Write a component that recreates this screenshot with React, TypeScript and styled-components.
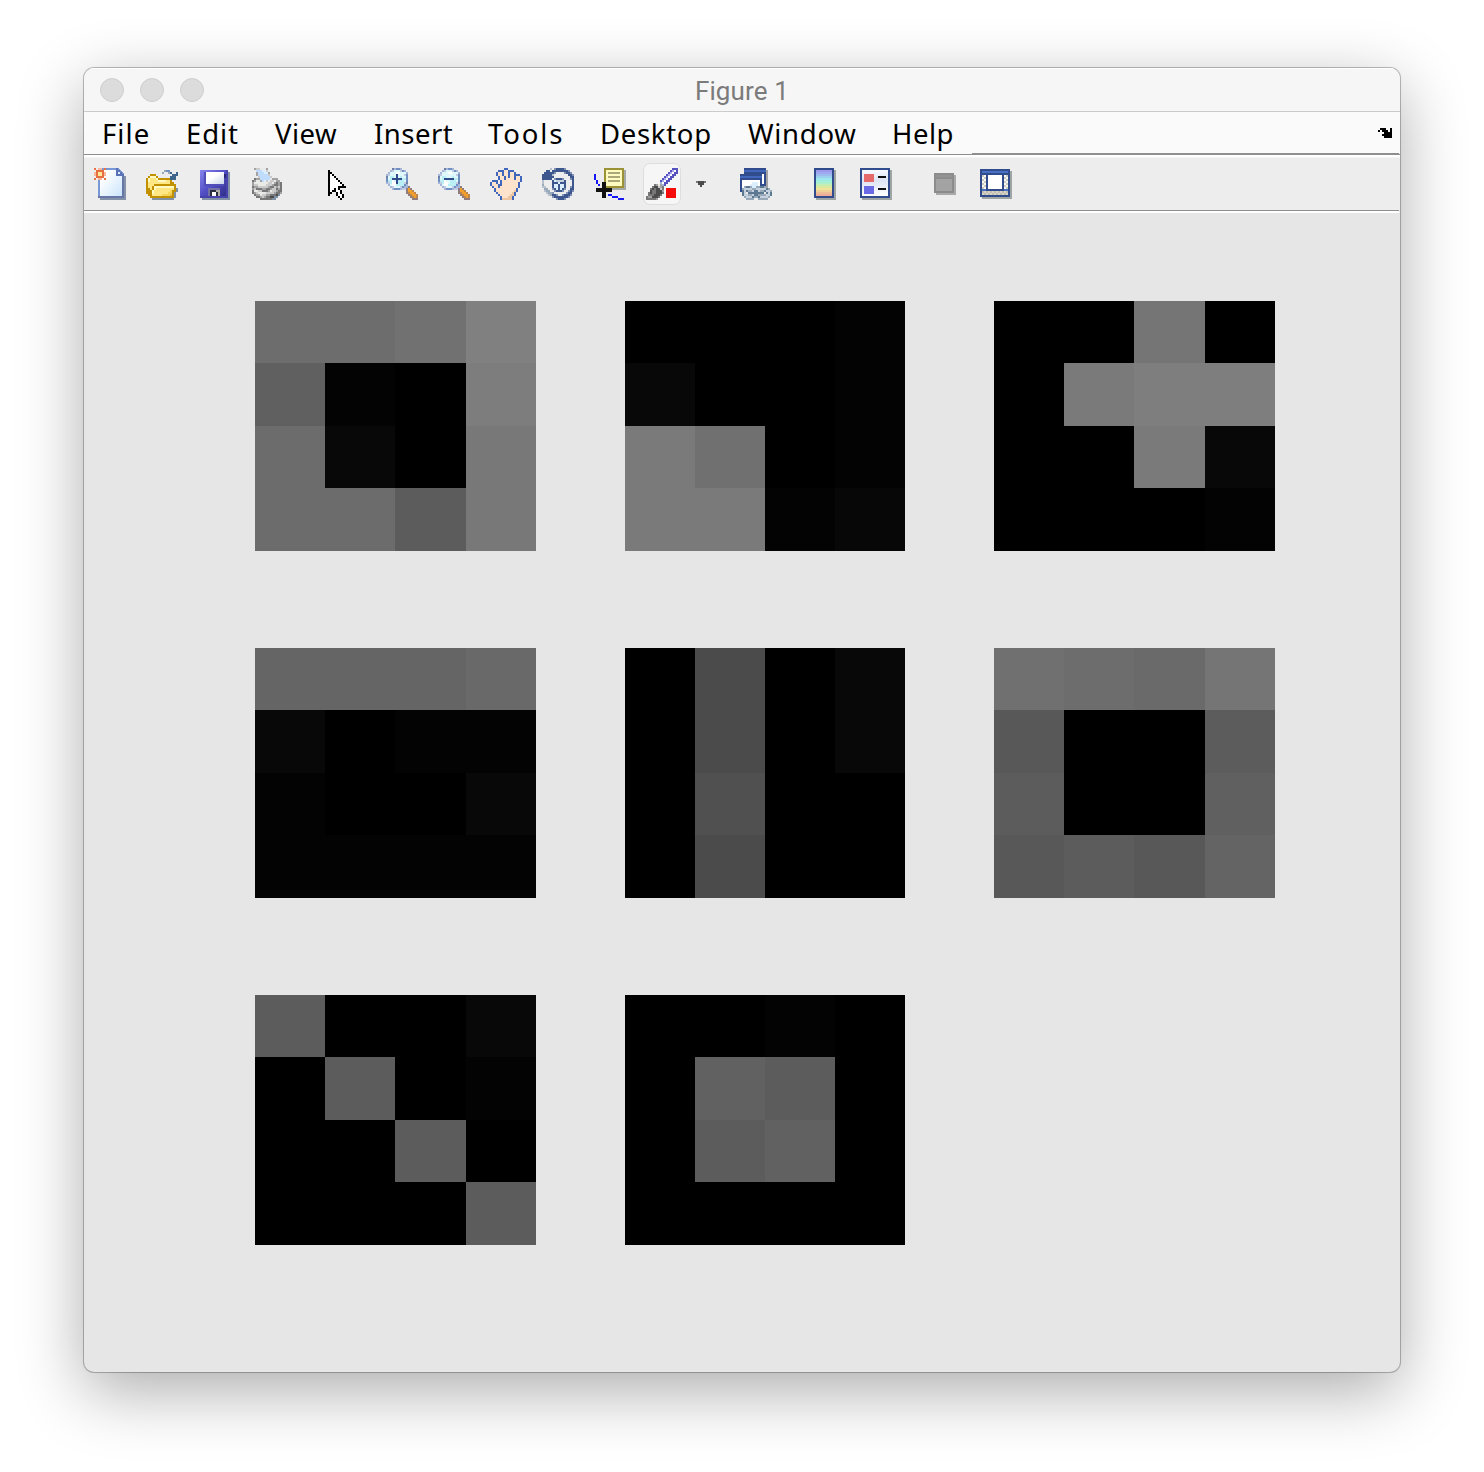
import React from "react";
import styled, { createGlobalStyle } from "styled-components";

const GlobalStyle = createGlobalStyle`
  * { box-sizing: border-box; }
  html, body { margin: 0; background: #fff; }
`;

const Desktop = styled.div`
  width: 1484px;
  height: 1472px;
  padding: 68px 84px 100px;
  overflow: hidden;
  background: #fff;
`;

const Window = styled.section`
  display: flex;
  flex-direction: column;
  width: 1316px;
  height: 1304px;
  border-radius: 10px;
  overflow: hidden;
  background: #e6e6e6;
  box-shadow: 0 0 0 1px rgba(0, 0, 0, 0.22), 0 0 2px rgba(0, 0, 0, 0.15), 0 19px 66px rgba(0, 0, 0, 0.33);
`;

const TitleBar = styled.header`
  display: grid;
  grid-template-columns: 1fr auto 1fr;
  align-items: center;
  height: 44px;
  padding: 0 16px;
  background: #f6f6f6;
  border-bottom: 1px solid #cbcbcb;
  box-shadow: inset 0 1px 0 #fff;
`;

const Lights = styled.div`
  display: flex;
  gap: 16px;
`;

const Light = styled.i`
  width: 24px;
  height: 24px;
  border-radius: 50%;
  background: #dcdcdc;
  border: 1px solid #cecece;
`;

const Title = styled.h1`
  margin: 3px 0 0;
  font: 400 26px/30px Roboto, "Liberation Sans", sans-serif;
  letter-spacing: 0.15px;
  color: #7b7b7b;
`;

const MenuBar = styled.nav`
  display: flex;
  justify-content: space-between;
  height: 46px;
  background: linear-gradient(#fafafa 0 42px, #8e8e8e 42px 43px, #fff 43px 45px, #f4f4f4 45px);
`;

const MenuItems = styled.div`
  display: flex;
  width: 888px;
  padding-left: 18px;
`;

const MenuItem = styled.span<{ $w: number; $ls: number }>`
  width: ${(p) => p.$w}px;
  white-space: nowrap;
  font: 400 27.5px/43px "Noto Sans", "Open Sans", sans-serif;
  letter-spacing: ${(p) => p.$ls}px;
  color: #000;
`;

const MenuEnd = styled.div`
  display: flex;
  flex: 1;
  justify-content: flex-end;
  height: 43px;
  margin-right: 1px;
  padding: 16px 7px 0 0;
  border-bottom: 2px solid #8e8e8e;
`;

const ToolBar = styled.div`
  display: flex;
  height: 55px;
  padding: 5px 0 0 10px;
  background: linear-gradient(#ededed 0 52px, #8e8e8e 52px 53px, #fff 53px 55px);
  border-right: 1px solid #ededed;
`;

const Tool = styled.button<{ $gap?: number; $w?: number }>`
  display: flex;
  align-items: center;
  justify-content: center;
  width: ${(p) => p.$w ?? 32}px;
  height: 42px;
  margin: 0 0 0 ${(p) => p.$gap ?? 20}px;
  padding: 0;
  border: 0;
  background: none;
`;

const ActiveTool = styled(Tool)`
  background: #f6f6f6;
  border: 1px solid #dedede;
  border-radius: 7px;
`;

const Figure = styled.main`
  flex: 1;
  display: grid;
  grid-template-columns: 281px 280px 281px;
  grid-template-rows: repeat(3, 250px);
  column-gap: 89px;
  row-gap: 97px;
  padding: 88px 0 0 171px;
`;

const Plot = styled.div<{ $even: boolean }>`
  display: grid;
  grid-template-columns: 70px 70px ${(p) => (p.$even ? 70 : 71)}px 70px;
  grid-template-rows: 62px 63px 62px 63px;
`;

const Cell = styled.div<{ $v: number }>`
  background: rgb(${(p) => p.$v}, ${(p) => p.$v}, ${(p) => p.$v});
`;

const Svg = styled.svg`
  display: block;
  flex: none;
  overflow: visible;
`;

const INK: Record<string, string> = {
  k: "#000000", w: "#ffffff", n: "#304c8c", b: "#4167bd", s: "#fde3cb", t: "#edc5a0",
  l: "#a5b4d9", L: "#c3cbe2", c: "#b8eef4", C: "#dff8fb", o: "#f2a02b", O: "#bd8450",
  p: "#8f7c7c", y: "#ffe783", Y: "#fffac2", g: "#c29100", G: "#e8bd37", f: "#f7d45a",
  d: "#4b4b4b", D: "#777777", e: "#a2a2a2", E: "#cacaca", F: "#e9e9e5", q: "#bfdcff",
  Q: "#7da6e4", r: "#f60b0b", v: "#5552bd", V: "#aaa9ee", z: "#8090a5", x: "#3f658b",
  h: "#eb713f", H: "#f3b49d", i: "#dcefff", a: "#fffffb", m: "#718fc0", j: "#6e7fa5",
  N: "#3d568e", u: "#8091b3", U: "#b9c1cf", T: "#98a9b9", S: "#c5d2de", R: "#5d7891",
};

function Pixels({ rows }: { rows: string[] }) {
  const w = Math.max(...rows.map((r) => r.length));
  return (
    <Svg width={w * 2} height={rows.length * 2} viewBox={`0 0 ${w} ${rows.length}`} shapeRendering="crispEdges">
      {rows.flatMap((row, y) =>
        [...row].map((ch, x) =>
          ch === "." ? null : <rect key={`${x}-${y}`} x={x} y={y} width={1} height={1} fill={INK[ch]} />
        )
      )}
    </Svg>
  );
}

const folder = [
  "................",
  ".........Tmm....",
  "........T..Tx..x",
  "..ggg........xxx",
  ".gYYYg......xxx.",
  "gYyyyYggggggxxx.",
  "gYyyyyYYYYyyg...",
  "gyyyyyyyyyyygg..",
  "gyyyggggggggggg.",
  "gyygYYYYYYYYYYg.",
  "ggygYyyyyyyyyygz",
  "gggYyyyyyyyyfggz",
  "gggYyyyyyyyffgz.",
  ".ggyyyyyffffGgz.",
  "..ggggggggggggz.",
  "...zzzzzzzzzzz..",
];

const printer = [
  "..eEEFFFe.......",
  "...qqqiiE.......",
  "...eqqqiie......",
  "...eqqqqqE......",
  "....EqqqqqE.....",
  "..DeeqqqqqFeee..",
  ".DeFFeqiEFEEFee.",
  ".eFFFFFFFEEFeDeD",
  ".eEEFFFFEEEeDDeD",
  ".DeeEEEEEeDDEeED",
  ".eEDDDeeDDeEEDeD",
  ".DFFEEDDDeFEEeDD",
  ".DeEFFFFEEEEeDDe",
  "..DeeFEEeeDDDdz.",
  "...DDeEeDDddzz..",
  ".....DDDDDDzz...",
];

const pointer = [
  "k........", "kk.......", "kwk......", "kwwk.....", "kwwwk....",
  "kwwwwk...", "kwwwwwk..", "kwwwwwwk.", "kwwwwkkkk", "kwwkwk...",
  "kwkkwwk..", "kk..kwk..", "k...kwwk.", ".....kwk.", "......k..",
];

const magnifier = (plus: boolean) => {
  const v = plus ? "n" : "C";
  return [
    "...jlmml........",
    "..lLCCCLml......",
    ".lCCCwwCCCl.....",
    `lLCCC${v}CCCLm.....`,
    `jCccC${v}CcCCm.....`,
    "mCcnnnnnccm.....",
    `mccwC${v}cccCm.....`,
    `lLcww${v}cccLj.....`,
    ".lCwwccccml.....",
    "..lLCCCLmllp....",
    "...lmmmlLLpop...",
    "..........pooO..",
    "..........pOooO.",
    "...........pOooO",
    "............pOoO",
    ".............ppp",
  ];
};

const hand = [
  ".......bb.......",
  "....bbbssbbb....",
  "...bssbssbssb...",
  "...bssbssbssbbb.",
  "....bssbsbssbssb",
  "....bssbssssbssb",
  ".bbb.bsssssssssb",
  "bssb.bssssssssb.",
  "bsssbbssssssssb.",
  ".bssbsssssssssb.",
  "..bssssssssssb..",
  "..bssssssssstb..",
  "...bssssssstb...",
  "....bsssssttb...",
  ".....bsssttb....",
  ".....btttttb....",
];

const rotate = [
  "....U.uNNNNu....",
  "..NN.NNNNNNNNu..",
  ".NNNNNu....uNNu.",
  "NNNNNU.......NNu",
  "NNNNNN........NN",
  "NNNNN.uNNNu...uN",
  "U....NiSSSSN...N",
  "U....NNNiNNN...N",
  "T....NiiNiiN...N",
  "UU...NiiNiiN..uN",
  ".TT..uNiNiNu..NN",
  ".UTT..uNNNu..uNu",
  "..UTTu......uNN.",
  "...UTNNu..uNNNu.",
  ".....uNNNNNNNu..",
  ".......uNNNu....",
];

const brush = [
  ".............vvv",
  "............vVwv",
  "...........vVwvv",
  "..........vVwvv.",
  ".........vVwvv..",
  "........vVwvv...",
  ".......vVwvv....",
  ".......lwvv.....",
  "....DeFelv......",
  "...DddEeD.......",
  "..DdDddED.rrrrr.",
  "..dDDddde.rrrrr.",
  ".DdDDdddD.rrrrr.",
  ".DDDdddD..rrrrr.",
  "DeedddD...rrrrr.",
  "DDDDDe..........",
];

const linked = [
  "..nnnnnnnnnnn...",
  "..bbbbbbbbbbbe..",
  "..nnnnnnnnnnne..",
  "nnnnnnnnnnnwne..",
  "bbbbbbbbbbbwne..",
  "nnnnnnnnnnnwne..",
  "nwwwwwwwwwnwne..",
  "nwwwwwiiiwnwne..",
  "nwwwwiiiiwnnne..",
  "nwTRRTiiTTRRTe..",
  "nTSSSSTTSSSSSRT.",
  "nRSRTTSRRSTTRSST",
  ".RS.RRRRRRRR.RSR",
  ".RSSTTSRRTTTTSSR",
  "..TSSSRTTRSSSST.",
  "...TTTT..TTTTT..",
];

const undock = [".kkk..k", "k.kkk.k", "...kkkk", "..kkkkk", "...kkkk"];
const caret = ["DdddD", ".ddd.", "..d.."];

const NewIcon = () => (
  <Svg width={32} height={32} viewBox="0 0 16 16" shapeRendering="crispEdges">
    <defs>
      <linearGradient id="page" x1="0" y1="0" x2="1" y2="1">
        <stop offset="0.2" stopColor="#fff" /><stop offset="1" stopColor="#cbe5fb" />
      </linearGradient>
    </defs>
    <path d="M3 2h10v2h3v12H3z" fill="#8392a8" />
    <path d="M2 0h10l3 3v12H2z" fill="#7898d5" />
    <path d="M3 1h8v3h3v10H3z" fill="url(#page)" />
    <path d="M14 3h1v12H2v-1h12z" fill="#6676a7" />
    <path d="M11 0h1v1h1v1h1v1h1v1h-4z" fill="#5b72b5" />
    <path d="M12 2h1v1h-1z" fill="#d5e9ff" />
    <path d="M0 0h1v1H0zM5 0h1v1H5zM0 5h1v1H0zM5 5h1v1H5z" fill="#e97146" />
    <path d="M1 1h4v4H1z" fill="#e66f42" />
    <path d="M2 0h2v1H2zM0 2h1v2H0zM5 2h1v2H5zM2 5h2v1H2z" fill="#f6b9a0" />
    <path d="M2 2h2v2H2z" fill="#ffe899" />
  </Svg>
);

const SaveIcon = () => (
  <Svg width={32} height={32} viewBox="0 0 16 16" shapeRendering="crispEdges">
    <defs>
      <linearGradient id="disk" x1="0" y1="0" x2="1" y2="1">
        <stop offset="0" stopColor="#8785ee" /><stop offset="0.5" stopColor="#5350c6" /><stop offset="1" stopColor="#312f89" />
      </linearGradient>
      <linearGradient id="label" x1="0" y1="0" x2="1" y2="1">
        <stop offset="0.4" stopColor="#fff" /><stop offset="1" stopColor="#c8d6e8" />
      </linearGradient>
    </defs>
    <path d="M2 2h14v14H2z" fill="#8492a5" />
    <path d="M1 1h14v14H1z" fill="#4644ac" />
    <path d="M1 1h13v13H1z" fill="url(#disk)" />
    <path d="M3 2h10v7H3z" fill="#504eb9" />
    <path d="M4 2h9v6H4z" fill="url(#label)" />
    <path d="M13 3h1v2h-1z" fill="#2a2873" />
    <path d="M5 10h6v4H5z" fill="#7471a6" />
    <path d="M6 11h4v3H6z" fill="#29303c" />
    <path d="M7 12h2v2H7z" fill="#fff" />
    <path d="M9 11h1v1H9zM10 11h1v3h-1z" fill="#b0aca8" />
  </Svg>
);

const DataTipIcon = () => (
  <Svg width={32} height={32} viewBox="0 0 16 16" shapeRendering="crispEdges">
    <path d="M6 1h10v10H6z" fill="#a5a9a8" />
    <path d="M5 0h10v10H5z" fill="#9b9235" />
    <path d="M6 1h8v8H6z" fill="#fffcc1" />
    <path d="M7 2h6v1H7zM7 4h6v1H7zM7 6h6v1H7z" fill="#aaa779" />
    <path d="M0 3h1v3H0zM1 6h1v2H1zM2 8h1v1H2zM7 13h2v1H7zM9 14h3v1H9zM12 15h3v1h-3z" fill="#1717f2" />
    <path d="M4 7h2v3h3v2H6v3H4v-3H1v-2h3z" fill="#111" />
  </Svg>
);

const ramp = ["#9e99ec", "#9fa9ef", "#9cbcf0", "#9bd1ef", "#9ce6ed", "#9eeddd", "#aeefcb", "#c5edb3", "#dae99d", "#eee399", "#efd099", "#efbc98", "#eeab99"];

const ColorbarIcon = () => (
  <Svg width={22} height={32} viewBox="0 0 11 16" shapeRendering="crispEdges">
    <path d="M1 1h10v15H1z" fill="#9fa4a5" />
    <path d="M0 0h10v15H0z" fill="#304c8c" />
    {ramp.map((c, i) => <rect key={c} x={1} y={1 + i} width={8} height={1} fill={c} />)}
  </Svg>
);

const LegendIcon = () => (
  <Svg width={32} height={32} viewBox="0 0 16 16" shapeRendering="crispEdges">
    <defs>
      <linearGradient id="legend" x1="0" y1="0" x2="0" y2="1">
        <stop offset="0" stopColor="#f8faff" /><stop offset="0.4" stopColor="#dde5f3" /><stop offset="1" stopColor="#fff" />
      </linearGradient>
    </defs>
    <path d="M1 1h15v15H1z" fill="#9fa4a5" />
    <path d="M0 0h15v15H0z" fill="#304c8c" />
    <path d="M1 1h13v13H1z" fill="url(#legend)" />
    <path d="M2 3h5v4H2z" fill="#e66a6a" />
    <path d="M2 9h5v4H2z" fill="#6b6be5" />
    <path d="M9 4h4v1H9zM9 10h4v1H9z" fill="#111" />
  </Svg>
);

const HideToolsIcon = () => (
  <Svg width={22} height={22} viewBox="0 0 11 11" shapeRendering="crispEdges">
    <path d="M1 1h10v10H1z" fill="#aaa" />
    <path d="M0 0h10v10H0z" fill="#8c8c8c" />
    <path d="M1 1h8v1H1z" fill="#939393" />
    <path d="M1 3h8v6H1z" fill="#a3a3a3" />
  </Svg>
);

const ShowToolsIcon = () => (
  <Svg width={32} height={30} viewBox="0 0 16 15" shapeRendering="crispEdges">
    <path d="M1 1h15v14H1z" fill="#9fa4a5" />
    <path d="M0 0h15v14H0z" fill="#304c8c" />
    <path d="M1 1h13v1H1z" fill="#4870c3" />
    <path d="M1 3h13v7H1zM1 11h13v2H1z" fill="#f8f8f4" />
    {[3, 4, 5, 6, 7, 8, 9, 11, 12].map((y) =>
      Array.from({ length: 13 }, (_, i) => i + 1)
        .filter((x) => (x + y) % 2 === 0)
        .map((x) => <rect key={`${x}-${y}`} x={x} y={y} width={1} height={1} fill="#cbcac1" />)
    )}
    <path d="M1 11h13v2H1z" fill="#b9b5a3" fillOpacity=".55" />
    <path d="M3 3h9v8H3z" fill="#304c8c" />
    <path d="M4 3h7v7H4z" fill="#fff" />
    <path d="M1 10h13v1H1z" fill="#4870c3" />
    <path d="M3 10h9v1H3z" fill="#304c8c" />
  </Svg>
);

const menus: [string, number, number][] = [
  ["File", 84, 1.1], ["Edit", 89, 0.9], ["View", 99, 0.5], ["Insert", 114, 0.5],
  ["Tools", 112, 1.9], ["Desktop", 148, 0.7], ["Window", 144, 0.7], ["Help", 80, 0.5],
];

const plots: number[][] = [
  [109, 109, 113, 128, 96, 3, 0, 125, 108, 8, 0, 120, 108, 108, 92, 120],
  [0, 0, 0, 3, 8, 0, 0, 3, 122, 112, 0, 3, 122, 122, 3, 7],
  [0, 0, 117, 0, 0, 122, 126, 126, 0, 0, 122, 8, 0, 0, 0, 3],
  [101, 101, 101, 105, 8, 0, 3, 3, 3, 0, 0, 8, 3, 3, 3, 3],
  [0, 75, 0, 8, 0, 75, 0, 8, 0, 80, 0, 0, 0, 75, 0, 0],
  [112, 109, 106, 117, 88, 0, 0, 92, 92, 0, 0, 96, 88, 92, 88, 100],
  [92, 0, 0, 8, 0, 92, 0, 3, 0, 0, 92, 0, 0, 0, 0, 92],
  [0, 0, 3, 0, 0, 97, 92, 0, 0, 92, 97, 0, 0, 0, 0, 0],
];

export default function App() {
  return (
    <>
      <GlobalStyle />
      <Desktop>
        <Window>
          <TitleBar>
            <Lights><Light /><Light /><Light /></Lights>
            <Title>Figure 1</Title>
          </TitleBar>
          <MenuBar>
            <MenuItems>
              {menus.map(([label, w, ls]) => <MenuItem key={label} $w={w} $ls={ls}>{label}</MenuItem>)}
            </MenuItems>
            <MenuEnd><Pixels rows={undock} /></MenuEnd>
          </MenuBar>
          <ToolBar>
            <Tool $gap={0}><NewIcon /></Tool>
            <Tool><Pixels rows={folder} /></Tool>
            <Tool><SaveIcon /></Tool>
            <Tool><Pixels rows={printer} /></Tool>
            <Tool $gap={46} $w={18}><Pixels rows={[".", ...pointer]} /></Tool>
            <Tool $gap={40}><Pixels rows={magnifier(true)} /></Tool>
            <Tool><Pixels rows={magnifier(false)} /></Tool>
            <Tool><Pixels rows={hand} /></Tool>
            <Tool><Pixels rows={rotate} /></Tool>
            <Tool><DataTipIcon /></Tool>
            <ActiveTool $gap={17} $w={38}><Pixels rows={brush} /></ActiveTool>
            <Tool $gap={15} $w={10}><Pixels rows={caret} /></Tool>
            <Tool $gap={34}><Pixels rows={linked} /></Tool>
            <Tool $gap={42} $w={22}><ColorbarIcon /></Tool>
            <Tool $gap={24}><LegendIcon /></Tool>
            <Tool $gap={42} $w={22}><HideToolsIcon /></Tool>
            <Tool $gap={24}><ShowToolsIcon /></Tool>
          </ToolBar>
          <Figure>
            {plots.map((values, i) => (
              <Plot key={i} $even={i % 3 === 1}>
                {values.map((v, j) => <Cell key={j} $v={v} />)}
              </Plot>
            ))}
          </Figure>
        </Window>
      </Desktop>
    </>
  );
}
